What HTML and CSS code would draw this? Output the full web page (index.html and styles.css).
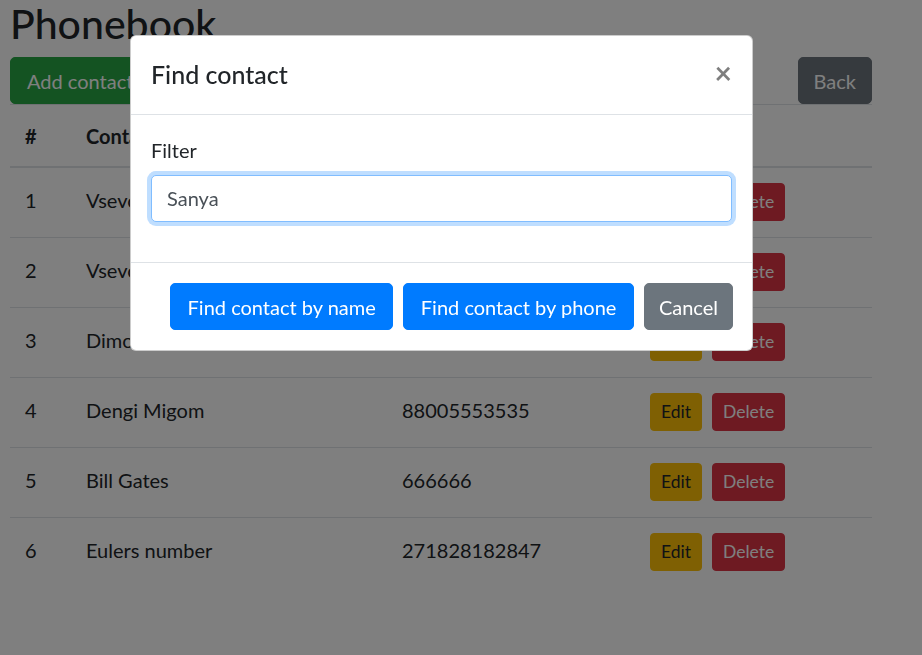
FILE: index.html
```html
<!DOCTYPE html>
<html lang="en">
<head>
<meta charset="utf-8">
<title>Phonebook</title>
<link rel="stylesheet" href="styles.css">
</head>
<body>
<div class="page">
  <h2 class="title">Phonebook</h2>
  <div class="toolbar">
    <button class="btn btn-success">Add contact</button>
    <button class="btn btn-primary">Find contact</button>
    <button class="btn btn-secondary back">Back</button>
  </div>
  <table class="table">
    <colgroup>
      <col class="c-num"><col class="c-name"><col class="c-phone"><col class="c-act">
    </colgroup>
    <thead>
      <tr><th>#</th><th>Contact name</th><th>Phone number</th><th>Actions</th></tr>
    </thead>
    <tbody>
      <tr><td>1</td><td>Vsevolod Ivanov</td><td>89161234567</td><td><button class="btn-sm btn-warning">Edit</button><button class="btn-sm btn-danger">Delete</button></td></tr>
      <tr><td>2</td><td>Vsevolod Petrov</td><td>89031112233</td><td><button class="btn-sm btn-warning">Edit</button><button class="btn-sm btn-danger">Delete</button></td></tr>
      <tr><td>3</td><td>Dimon</td><td>89257654321</td><td><button class="btn-sm btn-warning">Edit</button><button class="btn-sm btn-danger">Delete</button></td></tr>
      <tr><td>4</td><td>Dengi Migom</td><td>88005553535</td><td><button class="btn-sm btn-warning">Edit</button><button class="btn-sm btn-danger">Delete</button></td></tr>
      <tr><td>5</td><td>Bill Gates</td><td>666666</td><td><button class="btn-sm btn-warning">Edit</button><button class="btn-sm btn-danger">Delete</button></td></tr>
      <tr><td>6</td><td>Eulers number</td><td>271828182847</td><td><button class="btn-sm btn-warning">Edit</button><button class="btn-sm btn-danger">Delete</button></td></tr>
    </tbody>
  </table>
</div>

<div class="backdrop"></div>

<div class="modal">
  <div class="modal-header">
    <h5 class="modal-title">Find contact</h5>
    <button class="close" aria-label="Close">×</button>
  </div>
  <div class="modal-body">
    <div class="form-group">
      <label class="label" for="filter">Filter</label>
      <input id="filter" class="form-control" type="text" value="Sanya">
    </div>
  </div>
  <div class="modal-footer">
    <button class="btn btn-primary">Find contact by name</button>
    <button class="btn btn-primary">Find contact by phone</button>
    <button class="btn btn-secondary">Cancel</button>
  </div>
</div>
</body>
</html>
```

FILE: styles.css
```css
* { box-sizing: border-box; }

html, body {
  margin: 0;
  padding: 0;
  background: #fff;
}

body {
  font-family: Lato, "Noto Sans", "Liberation Sans", sans-serif;
  font-size: 20px;
  line-height: 30px;
  color: #212529;
  width: 922px;
  height: 655px;
  overflow: hidden;
}

.page {
  width: 862px;
  margin-left: 10px;
}

.title {
  margin: 0 0 10px;
  font-size: 41px;
  line-height: 47px;
  font-weight: 500;
}

.toolbar {
  display: flex;
  gap: 10px;
}

.back { margin-left: auto; }

.btn {
  font-family: inherit;
  font-size: 20px;
  line-height: 30px;
  padding: 7.5px 16px;
  border: 1.25px solid transparent;
  border-radius: 5px;
  color: #fff;
  cursor: pointer;
}

.btn-success { background: #28a745; border-color: #28a745; }
.btn-primary { background: #007bff; border-color: #007bff; }
.btn-secondary { background: #6c757d; border-color: #6c757d; }

.back { padding: 7.5px 15px; }

.btn-sm {
  font-family: inherit;
  font-size: 17.5px;
  line-height: 26.25px;
  padding: 5px 10px;
  border: 1.25px solid transparent;
  border-radius: 4px;
  margin-right: 10px;
  vertical-align: top;
}
.btn-warning { background: #ffc107; border-color: #ffc107; color: #212529; }
.btn-danger { background: #dc3545; border-color: #dc3545; color: #fff; }

.table {
  width: 862px;
  border-collapse: collapse;
  table-layout: fixed;
}

.c-num { width: 61px; }
.c-name { width: 316px; }
.c-phone { width: 248px; }
.c-act { width: 237px; }

.table th,
.table td {
  padding: 15px;
  text-align: left;
  vertical-align: top;
  border-top: 1.25px solid #dee2e6;
  white-space: nowrap;
}

.table thead th {
  font-weight: 700;
  padding-top: 16px;
  border-bottom: 2.5px solid #dee2e6;
}

.table tbody td {
  height: 70px;
  padding-top: 17px;
}

.table tbody td:last-child { padding-top: 15px; }

.table tbody tr:first-child td { border-top: 0; }

.backdrop {
  position: fixed;
  inset: 0;
  background: rgba(0, 0, 0, 0.5);
}

.modal {
  position: fixed;
  top: 35px;
  left: 130px;
  width: 623px;
  background: #fff;
  border: 1px solid rgba(0, 0, 0, 0.2);
  border-radius: 6px;
  display: flex;
  flex-direction: column;
}

.modal-header {
  display: flex;
  align-items: flex-start;
  justify-content: space-between;
  padding: 20px;
  border-bottom: 1.25px solid #dee2e6;
}

.modal-title {
  margin: 0;
  font-size: 25px;
  line-height: 37.5px;
  font-weight: 500;
}

.close {
  font-family: inherit;
  background: transparent;
  border: 0;
  padding: 18px 20px 22px;
  margin: -20px -20px -20px auto;
  font-size: 30px;
  font-weight: 700;
  line-height: 37.5px;
  color: #000;
  opacity: 0.5;
}

.modal-body {
  padding: 20px;
}

.form-group { margin-bottom: 20px; }

.label {
  display: block;
  margin-bottom: 10px;
}

.form-control {
  display: block;
  width: 100%;
  height: 47.5px;
  padding: 7.5px 15px;
  font-family: inherit;
  font-size: 20px;
  line-height: 30px;
  color: #495057;
  background: #fff;
  border: 1.25px solid #80bdff;
  border-radius: 5px;
  outline: 0;
  box-shadow: 0 0 0 4px rgba(0, 123, 255, 0.25);
}

.modal-footer {
  display: flex;
  justify-content: flex-end;
  align-items: center;
  padding: 15px 14px 15px 15px;
  border-top: 1.25px solid #dee2e6;
}

.modal-footer .btn { margin: 5px; }
.modal-footer .btn-primary { padding: 7.5px 16.5px; }
.modal-footer .btn-secondary { padding: 7.5px 14px; }
```
